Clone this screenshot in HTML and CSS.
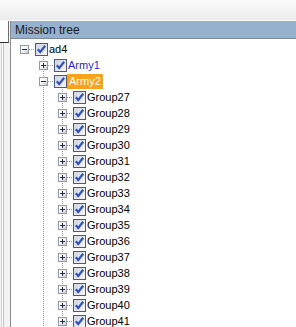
FILE: index.html
```html
<!DOCTYPE html>
<html lang="en">
<head>
    <meta charset="UTF-8">
    <title>Mission tree</title>
    <link rel="stylesheet" href="styles.css">
</head>
<body>
    <!-- shared gradient for the checkboxes -->
    <svg class="defs" width="0" height="0">
        <defs>
            <linearGradient id="cb" x1="0" y1="0" x2="1" y2="1">
                <stop offset="0" stop-color="#cdd2de"/>
                <stop offset="1" stop-color="#f6f7f9"/>
            </linearGradient>
        </defs>
    </svg>

    <div class="toolbar"></div>

    <div class="main">
        <!-- collapsed side pane -->
        <div class="side">
            <div class="side-top"></div>
        </div>

        <div class="panel">
            <div class="panel-header">Mission tree</div>

            <div class="tree">
                <div class="node">
                    <span class="conn"><span class="exp minus"></span></span>
                    <svg class="check" width="13" height="13" viewBox="0 0 13 13"><rect x=".5" y=".5" width="12" height="12" fill="url(#cb)" stroke="#4a5b7c"/><path d="M2.8 6.3l2.4 2.7L10.2 2.8" fill="none" stroke="#3350bd" stroke-width="2.2"/></svg>
                    <span class="label">ad4</span>
                </div>

                <div class="node">
                    <span class="guide"></span>
                    <span class="conn branch"><span class="exp plus"></span></span>
                    <svg class="check" width="13" height="13" viewBox="0 0 13 13"><rect x=".5" y=".5" width="12" height="12" fill="url(#cb)" stroke="#4a5b7c"/><path d="M2.8 6.3l2.4 2.7L10.2 2.8" fill="none" stroke="#3350bd" stroke-width="2.2"/></svg>
                    <span class="label link">Army1</span>
                </div>

                <div class="node">
                    <span class="guide"></span>
                    <span class="conn branch"><span class="exp minus"></span></span>
                    <svg class="check" width="13" height="13" viewBox="0 0 13 13"><rect x=".5" y=".5" width="12" height="12" fill="url(#cb)" stroke="#4a5b7c"/><path d="M2.8 6.3l2.4 2.7L10.2 2.8" fill="none" stroke="#3350bd" stroke-width="2.2"/></svg>
                    <span class="label selected">Army2</span>
                </div>

                <!-- groups of Army2 -->
                <div class="node">
                    <span class="guide"></span><span class="guide line"></span>
                    <span class="conn branch"><span class="exp plus"></span></span>
                    <svg class="check" width="13" height="13" viewBox="0 0 13 13"><rect x=".5" y=".5" width="12" height="12" fill="url(#cb)" stroke="#4a5b7c"/><path d="M2.8 6.3l2.4 2.7L10.2 2.8" fill="none" stroke="#3350bd" stroke-width="2.2"/></svg>
                    <span class="label">Group27</span>
                </div>
                <div class="node">
                    <span class="guide"></span><span class="guide line"></span>
                    <span class="conn branch"><span class="exp plus"></span></span>
                    <svg class="check" width="13" height="13" viewBox="0 0 13 13"><rect x=".5" y=".5" width="12" height="12" fill="url(#cb)" stroke="#4a5b7c"/><path d="M2.8 6.3l2.4 2.7L10.2 2.8" fill="none" stroke="#3350bd" stroke-width="2.2"/></svg>
                    <span class="label">Group28</span>
                </div>
                <div class="node">
                    <span class="guide"></span><span class="guide line"></span>
                    <span class="conn branch"><span class="exp plus"></span></span>
                    <svg class="check" width="13" height="13" viewBox="0 0 13 13"><rect x=".5" y=".5" width="12" height="12" fill="url(#cb)" stroke="#4a5b7c"/><path d="M2.8 6.3l2.4 2.7L10.2 2.8" fill="none" stroke="#3350bd" stroke-width="2.2"/></svg>
                    <span class="label">Group29</span>
                </div>
                <div class="node">
                    <span class="guide"></span><span class="guide line"></span>
                    <span class="conn branch"><span class="exp plus"></span></span>
                    <svg class="check" width="13" height="13" viewBox="0 0 13 13"><rect x=".5" y=".5" width="12" height="12" fill="url(#cb)" stroke="#4a5b7c"/><path d="M2.8 6.3l2.4 2.7L10.2 2.8" fill="none" stroke="#3350bd" stroke-width="2.2"/></svg>
                    <span class="label">Group30</span>
                </div>
                <div class="node">
                    <span class="guide"></span><span class="guide line"></span>
                    <span class="conn branch"><span class="exp plus"></span></span>
                    <svg class="check" width="13" height="13" viewBox="0 0 13 13"><rect x=".5" y=".5" width="12" height="12" fill="url(#cb)" stroke="#4a5b7c"/><path d="M2.8 6.3l2.4 2.7L10.2 2.8" fill="none" stroke="#3350bd" stroke-width="2.2"/></svg>
                    <span class="label">Group31</span>
                </div>
                <div class="node">
                    <span class="guide"></span><span class="guide line"></span>
                    <span class="conn branch"><span class="exp plus"></span></span>
                    <svg class="check" width="13" height="13" viewBox="0 0 13 13"><rect x=".5" y=".5" width="12" height="12" fill="url(#cb)" stroke="#4a5b7c"/><path d="M2.8 6.3l2.4 2.7L10.2 2.8" fill="none" stroke="#3350bd" stroke-width="2.2"/></svg>
                    <span class="label">Group32</span>
                </div>
                <div class="node">
                    <span class="guide"></span><span class="guide line"></span>
                    <span class="conn branch"><span class="exp plus"></span></span>
                    <svg class="check" width="13" height="13" viewBox="0 0 13 13"><rect x=".5" y=".5" width="12" height="12" fill="url(#cb)" stroke="#4a5b7c"/><path d="M2.8 6.3l2.4 2.7L10.2 2.8" fill="none" stroke="#3350bd" stroke-width="2.2"/></svg>
                    <span class="label">Group33</span>
                </div>
                <div class="node">
                    <span class="guide"></span><span class="guide line"></span>
                    <span class="conn branch"><span class="exp plus"></span></span>
                    <svg class="check" width="13" height="13" viewBox="0 0 13 13"><rect x=".5" y=".5" width="12" height="12" fill="url(#cb)" stroke="#4a5b7c"/><path d="M2.8 6.3l2.4 2.7L10.2 2.8" fill="none" stroke="#3350bd" stroke-width="2.2"/></svg>
                    <span class="label">Group34</span>
                </div>
                <div class="node">
                    <span class="guide"></span><span class="guide line"></span>
                    <span class="conn branch"><span class="exp plus"></span></span>
                    <svg class="check" width="13" height="13" viewBox="0 0 13 13"><rect x=".5" y=".5" width="12" height="12" fill="url(#cb)" stroke="#4a5b7c"/><path d="M2.8 6.3l2.4 2.7L10.2 2.8" fill="none" stroke="#3350bd" stroke-width="2.2"/></svg>
                    <span class="label">Group35</span>
                </div>
                <div class="node">
                    <span class="guide"></span><span class="guide line"></span>
                    <span class="conn branch"><span class="exp plus"></span></span>
                    <svg class="check" width="13" height="13" viewBox="0 0 13 13"><rect x=".5" y=".5" width="12" height="12" fill="url(#cb)" stroke="#4a5b7c"/><path d="M2.8 6.3l2.4 2.7L10.2 2.8" fill="none" stroke="#3350bd" stroke-width="2.2"/></svg>
                    <span class="label">Group36</span>
                </div>
                <div class="node">
                    <span class="guide"></span><span class="guide line"></span>
                    <span class="conn branch"><span class="exp plus"></span></span>
                    <svg class="check" width="13" height="13" viewBox="0 0 13 13"><rect x=".5" y=".5" width="12" height="12" fill="url(#cb)" stroke="#4a5b7c"/><path d="M2.8 6.3l2.4 2.7L10.2 2.8" fill="none" stroke="#3350bd" stroke-width="2.2"/></svg>
                    <span class="label">Group37</span>
                </div>
                <div class="node">
                    <span class="guide"></span><span class="guide line"></span>
                    <span class="conn branch"><span class="exp plus"></span></span>
                    <svg class="check" width="13" height="13" viewBox="0 0 13 13"><rect x=".5" y=".5" width="12" height="12" fill="url(#cb)" stroke="#4a5b7c"/><path d="M2.8 6.3l2.4 2.7L10.2 2.8" fill="none" stroke="#3350bd" stroke-width="2.2"/></svg>
                    <span class="label">Group38</span>
                </div>
                <div class="node">
                    <span class="guide"></span><span class="guide line"></span>
                    <span class="conn branch"><span class="exp plus"></span></span>
                    <svg class="check" width="13" height="13" viewBox="0 0 13 13"><rect x=".5" y=".5" width="12" height="12" fill="url(#cb)" stroke="#4a5b7c"/><path d="M2.8 6.3l2.4 2.7L10.2 2.8" fill="none" stroke="#3350bd" stroke-width="2.2"/></svg>
                    <span class="label">Group39</span>
                </div>
                <div class="node">
                    <span class="guide"></span><span class="guide line"></span>
                    <span class="conn branch"><span class="exp plus"></span></span>
                    <svg class="check" width="13" height="13" viewBox="0 0 13 13"><rect x=".5" y=".5" width="12" height="12" fill="url(#cb)" stroke="#4a5b7c"/><path d="M2.8 6.3l2.4 2.7L10.2 2.8" fill="none" stroke="#3350bd" stroke-width="2.2"/></svg>
                    <span class="label">Group40</span>
                </div>
                <div class="node">
                    <span class="guide"></span><span class="guide line"></span>
                    <span class="conn branch"><span class="exp plus"></span></span>
                    <svg class="check" width="13" height="13" viewBox="0 0 13 13"><rect x=".5" y=".5" width="12" height="12" fill="url(#cb)" stroke="#4a5b7c"/><path d="M2.8 6.3l2.4 2.7L10.2 2.8" fill="none" stroke="#3350bd" stroke-width="2.2"/></svg>
                    <span class="label">Group41</span>
                </div>
            </div>
        </div>
    </div>
</body>
</html>
```

FILE: styles.css
```css
* {
    box-sizing: border-box;
}

body {
    margin: 0;
    width: 296px;
    height: 327px;
    overflow: hidden;
    background-color: #f4f4f4;
    font-family: "Liberation Sans", Arial, sans-serif;
}

.defs {
    display: block;
    height: 0;
}

.toolbar {
    height: 21px;
    background: linear-gradient(#fcfcfc, #ebebeb);
    border-bottom: 1px solid #fafafa;
}

.main {
    display: flex;
    height: 306px;
}

/* collapsed pane on the left */
.side {
    width: 10px;
    flex: none;
    background: linear-gradient(to right, #f2f2f2 0 1px, #d6d6d6 1px 2px, #fdfdfd 2px 3px, #c4c4c4 3px 4px, #f3f3f3 4px);
}

.side-top {
    height: 22px;
    width: 9px;
    background-color: #fdfdfd;
    border-right: 1px solid #6f6f6f;
    border-bottom: 1px solid #2e2e2e;
}

.panel {
    flex: 1;
    background-color: #fff;
    border-left: 1px solid #8c8c8c;
}

/* Header of the tree panel */
.panel-header {
    height: 18px;
    padding: 2px 0 0 4px;
    background-color: #95b1ce;
    border-bottom: 1px solid #7c8a99;
    color: #1a1a1a;
    font-size: 12px;
    line-height: 15px;
}

.tree {
    padding: 2px 0 0 5px;
}

.node {
    display: flex;
    height: 16px;
}

.guide,
.conn {
    flex: none;
    width: 19px;
    height: 16px;
}

.guide.line {
    background: repeating-linear-gradient(to bottom, #9a9a9a 0 1px, transparent 1px 2px) 8px 0 / 1px 100% no-repeat;
}

.conn {
    padding: 4px 0 0 4px;
    background: repeating-linear-gradient(to right, #9a9a9a 0 1px, transparent 1px 2px) 9px 8px / 10px 1px no-repeat;
}

.conn.branch {
    background:
        repeating-linear-gradient(to right, #9a9a9a 0 1px, transparent 1px 2px) 9px 8px / 10px 1px no-repeat,
        repeating-linear-gradient(to bottom, #9a9a9a 0 1px, transparent 1px 2px) 8px 0 / 1px 100% no-repeat;
}

/* expand / collapse box */
.exp {
    display: block;
    width: 9px;
    height: 9px;
    border: 1px solid #8f9aa6;
}

.exp.plus {
    background:
        linear-gradient(#1f2a44, #1f2a44) center / 5px 1px no-repeat,
        linear-gradient(#1f2a44, #1f2a44) center / 1px 5px no-repeat,
        linear-gradient(135deg, #fff 35%, #c8ccd4);
}

.exp.minus {
    background:
        linear-gradient(#1f2a44, #1f2a44) center / 5px 1px no-repeat,
        linear-gradient(135deg, #fff 35%, #c8ccd4);
}

.check {
    flex: none;
    margin-top: 2px;
}

.label {
    padding: 0 2px 0 1px;
    font-size: 11px;
    line-height: 16px;
    color: #000;
    white-space: nowrap;
}

.label.link {
    color: #1f1fdc;
}

.label.selected {
    height: 15px;
    margin-top: 1px;
    padding: 0 2px;
    line-height: 14px;
    background-color: #f8a31b;
    color: #fff;
}
```
